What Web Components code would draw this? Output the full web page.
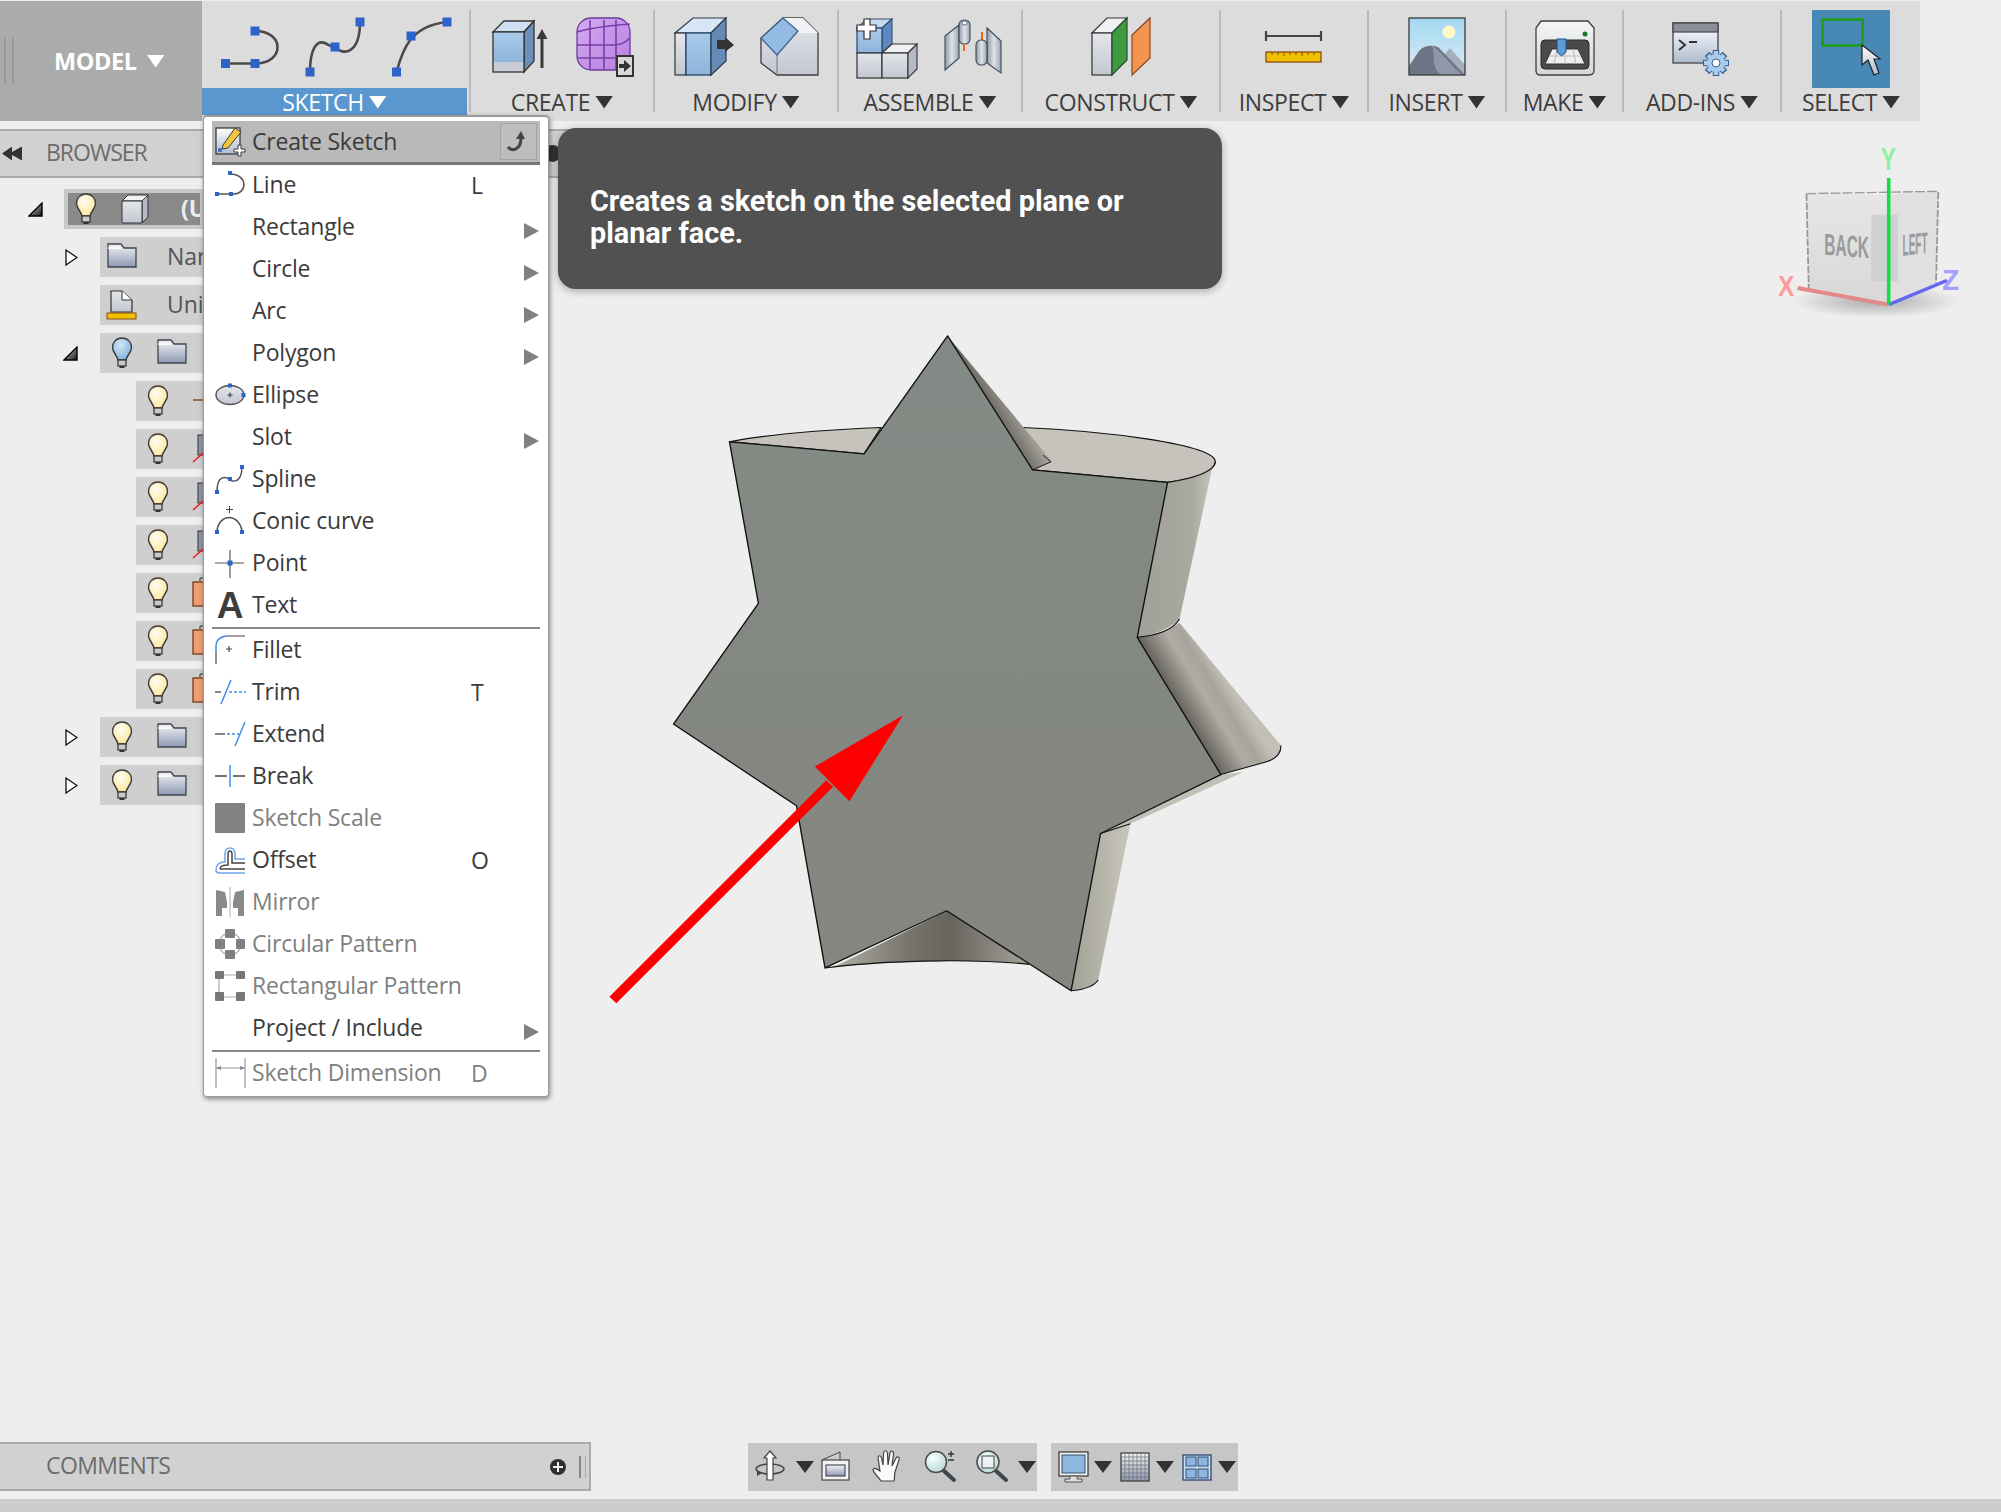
<!DOCTYPE html>
<html>
<head>
<meta charset="utf-8">
<title>Sketch menu</title>
<style>
	html, body { margin: 0; padding: 0; background: #eeeeee; }
	body { width: 2001px; height: 1512px; overflow: hidden; font-family: "Open Sans", "Noto Sans", sans-serif; color: #3c3c3c; }
</style>
</head>
<body>
<fx-app>
	<fx-toolbar>
		<tool-group label="SKETCH" w="269" active>
			<fx-icon name="tbLine"></fx-icon><fx-icon name="tbSpline"></fx-icon><fx-icon name="tbArc"></fx-icon>
		</tool-group>
		<tool-group label="CREATE" w="184">
			<fx-icon name="tbExtrude"></fx-icon><fx-icon name="tbForm"></fx-icon>
		</tool-group>
		<tool-group label="MODIFY" w="184">
			<fx-icon name="tbPress"></fx-icon><fx-icon name="tbFillet"></fx-icon>
		</tool-group>
		<tool-group label="ASSEMBLE" w="184">
			<fx-icon name="tbComponent"></fx-icon><fx-icon name="tbJoint"></fx-icon>
		</tool-group>
		<tool-group label="CONSTRUCT" w="198">
			<fx-icon name="tbPlane"></fx-icon>
		</tool-group>
		<tool-group label="INSPECT" w="148">
			<fx-icon name="tbMeasure"></fx-icon>
		</tool-group>
		<tool-group label="INSERT" w="138">
			<fx-icon name="tbInsert"></fx-icon>
		</tool-group>
		<tool-group label="MAKE" w="117">
			<fx-icon name="tbMake"></fx-icon>
		</tool-group>
		<tool-group label="ADD-INS" w="158">
			<fx-icon name="tbAddins"></fx-icon>
		</tool-group>
		<tool-group label="SELECT" w="138" last>
			<fx-icon name="tbSelect" style="margin-top:-8px"></fx-icon>
		</tool-group>
	</fx-toolbar>

	<!-- the menu covers the rows from x=203: only the part of a name left of it is written -->
	<browser-panel>
		<tree-row indent="64" toggle="open" bulb="bulb" icon="cube" selected>(U</tree-row>
		<tree-row indent="100" toggle="closed" icon="folder">Nar</tree-row>
		<tree-row indent="100" icon="units">Uni</tree-row>
		<tree-row indent="100" toggle="open" bulb="bulbBlue" icon="folder"></tree-row>
		<tree-row indent="136" bulb="bulb" icon="origin"></tree-row>
		<tree-row indent="136" bulb="bulb" icon="axis"></tree-row>
		<tree-row indent="136" bulb="bulb" icon="axis"></tree-row>
		<tree-row indent="136" bulb="bulb" icon="axis"></tree-row>
		<tree-row indent="136" bulb="bulb" icon="plane"></tree-row>
		<tree-row indent="136" bulb="bulb" icon="plane"></tree-row>
		<tree-row indent="136" bulb="bulb" icon="plane"></tree-row>
		<tree-row indent="100" toggle="closed" bulb="bulb" icon="folder"></tree-row>
		<tree-row indent="100" toggle="closed" bulb="bulb" icon="folder"></tree-row>
	</browser-panel>

	<model-view></model-view>
	<view-cube></view-cube>

	<sketch-menu>
		<menu-item head icon="miCreate">Create Sketch</menu-item>
		<menu-item icon="miLine" key="L">Line</menu-item>
		<menu-item sub>Rectangle</menu-item>
		<menu-item sub>Circle</menu-item>
		<menu-item sub>Arc</menu-item>
		<menu-item sub>Polygon</menu-item>
		<menu-item icon="miEllipse">Ellipse</menu-item>
		<menu-item sub>Slot</menu-item>
		<menu-item icon="miSpline">Spline</menu-item>
		<menu-item icon="miConic">Conic curve</menu-item>
		<menu-item icon="miPoint">Point</menu-item>
		<menu-item icon="miText">Text</menu-item>
		<menu-item divider></menu-item>
		<menu-item icon="miFillet">Fillet</menu-item>
		<menu-item icon="miTrim" key="T">Trim</menu-item>
		<menu-item icon="miExtend">Extend</menu-item>
		<menu-item icon="miBreak">Break</menu-item>
		<menu-item icon="miScale" off>Sketch Scale</menu-item>
		<menu-item icon="miOffset" key="O">Offset</menu-item>
		<menu-item icon="miMirror" off>Mirror</menu-item>
		<menu-item icon="miCircular" off>Circular Pattern</menu-item>
		<menu-item icon="miRectPat" off>Rectangular Pattern</menu-item>
		<menu-item sub>Project / Include</menu-item>
		<menu-item divider></menu-item>
		<menu-item icon="miDimension" key="D" off>Sketch Dimension</menu-item>
	</sketch-menu>

	<tool-tip>Creates a sketch on the selected plane or planar face.</tool-tip>

	<fx-footer></fx-footer>
</fx-app>

<script>
// gradients used by the toolbar and tree icons, ids are local to each shadow root
const DEFS = `
	<defs>
		<linearGradient id="gBlue" x1="0" y1="0" x2="0" y2="1"><stop offset="0" stop-color="#a9cbeb"/><stop offset="1" stop-color="#8fb4da"/></linearGradient>
		<linearGradient id="gGrey" x1="0" y1="0" x2="0" y2="1"><stop offset="0" stop-color="#e4e6ea"/><stop offset="1" stop-color="#c2c7d1"/></linearGradient>
		<linearGradient id="gSteel" x1="0" y1="0" x2="1" y2="0"><stop offset="0" stop-color="#8f9aa6"/><stop offset=".5" stop-color="#dfe3e8"/><stop offset="1" stop-color="#9aa5b1"/></linearGradient>
		<linearGradient id="gFolder" x1="0" y1="0" x2="0" y2="1"><stop offset="0" stop-color="#f4f5f8"/><stop offset="1" stop-color="#8b98b2"/></linearGradient>
		<linearGradient id="gPurple" x1="0" y1="0" x2="1" y2="1"><stop offset="0" stop-color="#d4aaf0"/><stop offset="1" stop-color="#b77fe2"/></linearGradient>
		<linearGradient id="gSky" x1="0" y1="0" x2="0" y2="1"><stop offset="0" stop-color="#a3d8f2"/><stop offset="1" stop-color="#dcedf4"/></linearGradient>
		<linearGradient id="gWhite" x1="0" y1="0" x2="0" y2="1"><stop offset="0" stop-color="#ffffff"/><stop offset="1" stop-color="#aebbd0"/></linearGradient>
		<linearGradient id="gBody" x1="0" y1="0" x2="0" y2="1"><stop offset="0" stop-color="#f5f5f5"/><stop offset="1" stop-color="#d4d6da"/></linearGradient>
		<radialGradient id="gBulb" cx=".42" cy=".32" r=".7"><stop offset="0" stop-color="#fffdf0"/><stop offset="1" stop-color="#fbe79b"/></radialGradient>
		<radialGradient id="gBulbB" cx=".42" cy=".32" r=".7"><stop offset="0" stop-color="#d3e6f7"/><stop offset="1" stop-color="#7fb2e0"/></radialGradient>
		<radialGradient id="gLens" cx=".35" cy=".3" r=".8"><stop offset="0" stop-color="#f6ffff"/><stop offset="1" stop-color="#b7d6d6"/></radialGradient>
	</defs>`;

const sq = (x, y, s = 9, c = '#2d62c8') => `<rect x="${x - s / 2}" y="${y - s / 2}" width="${s}" height="${s}" fill="${c}"/>`;
const bulb = g => `<path d="M11 1C5 1 1.500 5.500 1.500 10.500C1.500 15.500 6 18 7 23H15C16 18 20.500 15.500 20.500 10.500C20.500 5.500 17 1 11 1Z" fill="url(#${g})" stroke="#3a3a3a" stroke-width="1.400"/><rect x="7" y="23" width="8" height="6" fill="#c9c9c9" stroke="#333" stroke-width="1.200"/><rect x="8.500" y="29" width="5" height="2" fill="#333"/>`;
const folder = `<path d="M1 25V2H14L17 6H29V25Z" fill="url(#gFolder)" stroke="#3f4450" stroke-width="1.300"/><path d="M1 6H14" stroke="#fff" stroke-width="1.500"/>`;

const ICONS = {
	tbLine: [58, 58, `<path d="M4.500 45.500H34C64 45.500 64 13 34 13" fill="none" stroke="#4a4a4a" stroke-width="2.600"/>${sq(4.500, 45.500)}${sq(34, 45.500)}${sq(34, 13)}`],
	tbSpline: [58, 58, `<path d="M3 54C3 30 10 22 18 25C22 27 24 29 28 29C36 38 53 36 53 4" fill="none" stroke="#4a4a4a" stroke-width="2.600"/>${sq(3, 54)}${sq(28, 29)}${sq(53, 4)}`],
	tbArc: [58, 58, `<path d="M3.500 54C10 30 18 8 54 4" fill="none" stroke="#4a4a4a" stroke-width="2.600"/>${sq(3.500, 54)}${sq(18, 18)}${sq(54, 4)}`],
	tbExtrude: [58, 58, `<g transform="translate(2 0)"><path d="M1 14L12 3H42L32 14Z" fill="#cfe0f2" stroke="#333" stroke-width="1.300"/><path d="M32 14L42 3V43L32 54Z" fill="#6b8fbb" stroke="#333" stroke-width="1.300"/><rect x="1" y="14" width="31" height="30" fill="url(#gBlue)"/><rect x="1" y="44" width="31" height="10" fill="#c8ccd6"/><rect x="1" y="14" width="31" height="40" fill="none" stroke="#333" stroke-width="1.300"/><path d="M50 50V19" stroke="#3a3a3a" stroke-width="3"/><path d="M44.500 21L50 11L55.500 21Z" fill="#3a3a3a"/></g>`],
	tbForm: [58, 58, `<rect x="1" y="0" width="53" height="52" rx="14" fill="url(#gPurple)" stroke="#6c3b97" stroke-width="1.300"/><path d="M1 14C14 10 28 8 54 6M1 27H38C44 27 50 24 54 20M1 40H54M14 2V52M28 2V52M40 2V27M40 27V52" fill="none" stroke="#7a3fa8" stroke-width="1.600"/><rect x="41" y="38" width="16" height="20" fill="#d8d8d8" stroke="#333" stroke-width="2"/><path d="M43 46H48V42L55 48L48 54V50H43Z" fill="#333"/>`],
	tbPress: [60, 58, `<g transform="translate(2 0)"><path d="M0 15L18 0H51L36 15Z" fill="#d7e6f6" stroke="#2e3a4a" stroke-width="1.200"/><rect x="0" y="15" width="11" height="42" fill="url(#gGrey)" stroke="#333" stroke-width="1.200"/><rect x="11" y="15" width="25" height="42" fill="url(#gBlue)" stroke="#24466e" stroke-width="1.300"/><path d="M36 15L51 0V43L36 57Z" fill="#658ab6" stroke="#2e3a4a" stroke-width="1.200"/><path d="M42 22H50V19L59 27L50 34V31H42Z" fill="#333"/></g>`],
	tbFillet: [58, 58, `<path d="M0 20L22 0H42L57 15V57H16L0 45Z" fill="url(#gGrey)" stroke="#3d3d3d" stroke-width="1.300"/><path d="M22 0H42L57 15H37Z" fill="#f1f2f5"/><path d="M16 37V57" stroke="#777" stroke-width="1"/><path d="M0 20L22 0L37 13L16 37Z" fill="#93bbe3" stroke="#3d5f88" stroke-width="1.200"/>`],
	tbComponent: [60, 60, `<path d="M0 10L10 1H35L25 10Z" fill="#c6dbf2" stroke="#33506f" stroke-width="1.100"/><path d="M25 10L35 1V26L25 35Z" fill="#6088c0" stroke="#33506f" stroke-width="1.100"/><rect x="0" y="10" width="25" height="25" fill="url(#gBlue)" stroke="#24466e" stroke-width="1.200"/><rect x="0" y="35" width="25" height="25" fill="url(#gGrey)" stroke="#333" stroke-width="1.200"/><path d="M25 35L35 26H60L51 35Z" fill="#eef0f4" stroke="#333" stroke-width="1.100"/><rect x="25" y="35" width="26" height="25" fill="url(#gGrey)" stroke="#333" stroke-width="1.200"/><path d="M51 35L60 26V51L51 60Z" fill="#b4bac6" stroke="#333" stroke-width="1.100"/><path d="M7 1H13V7H19V13H13V21H7V13H0V7H7Z" fill="#fff" stroke="#333" stroke-width="1.200"/>`],
	tbJoint: [58, 58, `<path d="M0 18L14 7V40L0 52Z" fill="url(#gSteel)" stroke="#3a4a5a" stroke-width="1.100"/><rect x="14" y="2" width="11" height="24" rx="5" fill="url(#gSteel)" stroke="#3a4a5a" stroke-width="1.100"/><ellipse cx="19.500" cy="5" rx="2.500" ry="2" fill="#fff" stroke="#3a4a5a" stroke-width=".8"/><path d="M19 26V33M37 14V24" stroke="#f06a14" stroke-width="2"/><path d="M42 10L56 23V55L42 45Z" fill="url(#gSteel)" stroke="#3a4a5a" stroke-width="1.100"/><rect x="31" y="22" width="11" height="25" rx="5" fill="url(#gSteel)" stroke="#3a4a5a" stroke-width="1.100"/>`],
	tbPlane: [60, 58, `<path d="M1 15L16 0H36L21 15Z" fill="#f1f2f4" stroke="#333" stroke-width="1.200"/><rect x="1" y="15" width="20" height="42" fill="url(#gGrey)" stroke="#333" stroke-width="1.200"/><path d="M21 15L36 0V42L21 57Z" fill="#3f9a3f" stroke="#2a4a2a" stroke-width="1.200"/><path d="M41 17L59 0V40L41 57Z" fill="#f39550" stroke="#8a4a20" stroke-width="1.200"/>`],
	tbMeasure: [58, 58, `<path d="M1 13V23M1 18H56M56 13V23" fill="none" stroke="#444" stroke-width="2.200"/><rect x="1" y="34" width="55" height="10" fill="#f0c000" stroke="#8a4a10" stroke-width="1.300"/><path d="M7 34v3M13 34v3M19 34v4M25 34v3M31 34v3M37 34v4M43 34v3M49 34v3" stroke="#8a4a10" stroke-width="1"/>`],
	tbInsert: [58, 58, `<rect x="1" y="0" width="56" height="57" fill="url(#gSky)"/><ellipse cx="41" cy="14" rx="6.500" ry="6.500" fill="#fff8c8"/><path d="M35 38L42 30L57 47V57H35Z" fill="#a3afba"/><path d="M1 48L11 33C16 27 24 27 30 29L57 57H1Z" fill="#6c7485"/><path d="M24 28C30 30 44 48 54 57H34C22 50 28 38 24 28Z" fill="#8f98a8"/><rect x="1" y="0" width="56" height="57" fill="none" stroke="#3a3a3a" stroke-width="1.300"/>`],
	tbMake: [60, 58, `<path d="M6 3H53L59 10V52C59 55 57 57 54 57H5C2 57 1 55 1 52V10Z" fill="url(#gBody)" stroke="#3f3f3f" stroke-width="1.300"/><circle cx="50" cy="16" r="2.500" fill="#127a28"/><rect x="6" y="22" width="48" height="29" rx="4" fill="#4a4a4a" stroke="#2a2a2a"/><path d="M17 31H43L50 46H10Z" fill="#eeeeee" stroke="#333"/><path d="M14 38H46M22 31L19 46M30 31V46M38 31L41 46" stroke="#bbb" stroke-width="1"/><path d="M22 21H31V34L26.500 38L22 34Z" fill="#5a9bd8" stroke="#1f4f82"/>`],
	tbAddins: [60, 58, `<rect x="1" y="5" width="45" height="40" fill="url(#gWhite)" stroke="#444" stroke-width="1.300"/><rect x="1" y="5" width="45" height="9" fill="#8a8e96" stroke="#444" stroke-width="1.200"/><path d="M7 22L13 27L7 32M17 24H25" fill="none" stroke="#333" stroke-width="2"/><path d="M44 32V58M31 45H57M35 36L53 54M53 36L35 54" stroke="#35608f" stroke-width="6.500"/><path d="M44 33V57M32 45H56M36 37L52 53M52 37L36 53" stroke="#a9cbee" stroke-width="4.500"/><circle cx="44" cy="45" r="9" fill="#a9cbee"/><circle cx="44" cy="45" r="4" fill="#fff" stroke="#35608f"/>`],
	tbSelect: [78, 78, `<rect width="78" height="78" rx="1" fill="#4888b5"/><rect x="10.500" y="9.500" width="40" height="26" fill="none" stroke="#1f9c13" stroke-width="2.500"/><path d="M50 35V55L56 50L62 65L67 63L62 49L68 49Z" fill="url(#gWhite)" stroke="#222" stroke-width="1.200"/>`],

	bulb: [22, 32, bulb('gBulb')],
	bulbBlue: [22, 32, bulb('gBulbB')],
	cube: [30, 30, `<path d="M1 7L7 1H27L21 7Z" fill="#f1f2f5" stroke="#333"/><path d="M21 7L27 1V23L21 29Z" fill="#b4bac6" stroke="#333"/><rect x="1" y="7" width="20" height="22" rx="1" fill="url(#gGrey)" stroke="#333"/>`],
	folder: [30, 30, folder],
	units: [30, 30, `<path d="M4 1H15L25 10V22H4Z" fill="url(#gGrey)" stroke="#333" stroke-width="1.200"/><path d="M15 1V10H25" fill="#fff" stroke="#333"/><rect x="0" y="23" width="29" height="6" fill="#f0c000" stroke="#8a4a10"/>`],
	origin: [30, 30, `<path d="M0 14H10M14 14L18 10L22 14L18 18Z" fill="none" stroke="#8a4a22" stroke-width="1.400"/>`],
	axis: [30, 30, `<rect x="5" y="1" width="18" height="20" fill="#8e97a8" stroke="#333"/><path d="M0 28L18 12" stroke="#ee1c1c" stroke-width="1.500"/>`],
	plane: [30, 30, `<path d="M7 3V0H11V3" fill="none" stroke="#333"/><rect x="0" y="4" width="26" height="24" fill="#ec9f73" stroke="#7a3a14" stroke-width="1.300"/>`],

	miCreate: [30, 30, `<rect x="1" y="1" width="24" height="26" fill="url(#gWhite)" stroke="#3c3c3c" stroke-width="1.300"/>${sq(5, 23, 3.500)}<path d="M8 18L20 1L26 5L13 21L7 22Z" fill="#f3c43a" stroke="#3c3c3c"/><path d="M19 22H23V18H26V22H30V25H26V29H23V25H19Z" fill="#fff" stroke="#3c3c3c"/>`],
	miPin: [24, 24, `<path d="M4 17C8 22 17 20 17 8" fill="none" stroke="#444" stroke-width="3"/><path d="M12 9L17 1L21 9Z" fill="#444"/>`],
	miLine: [32, 30, `<path d="M2 24H18C33 24 33 4 15 4" fill="none" stroke="#555" stroke-width="1.500"/>${sq(2, 24, 4)}${sq(16, 24, 4)}${sq(15, 3, 4)}`],
	miEllipse: [32, 30, `<ellipse cx="15" cy="15" rx="14" ry="9.500" fill="url(#gGrey)" stroke="#555" stroke-width="1.400"/><path d="M15 12.500V17.500M12.500 15H17.500" stroke="#333"/>${sq(15, 5.500, 4)}${sq(28.500, 15, 4)}`],
	miSpline: [32, 30, `<path d="M2 28C2 16 6 12 12 14C14 15 15 16 17 17C24 18 27 12 27 2" fill="none" stroke="#555" stroke-width="1.500"/>${sq(2, 28, 4)}${sq(15, 15, 4)}${sq(27, 3, 4)}`],
	miConic: [32, 30, `<path d="M2 25C4 7 24 7 27 25" fill="none" stroke="#555" stroke-width="1.500"/><path d="M14.500 0V7M11 3.500H18" stroke="#444"/>${sq(2, 26, 4)}${sq(27, 26, 4)}`],
	miPoint: [32, 30, `<path d="M0 15H29M15 2V30" stroke="#555" stroke-width="1.200"/>${sq(15, 15, 5)}`],
	miText: [32, 34, `<text x="15" y="30" text-anchor="middle" font-family="Liberation Sans, sans-serif" font-weight="700" font-size="37" fill="#3c3c3c">A</text>`],
	miFillet: [32, 30, `<path d="M1 18V11C1 5 5 2 11 1" fill="none" stroke="#3f8be8" stroke-width="1.500"/><path d="M11 1H30M1 18V29M14 11V17M11 14H17" stroke="#444" stroke-width="1.200"/>`],
	miTrim: [32, 30, `<path d="M0 15H6" stroke="#444" stroke-width="1.300"/><path d="M6 27L16 3" stroke="#3f8be8" stroke-width="1.500"/><path d="M14 15H31" stroke="#3f8be8" stroke-width="1.300" stroke-dasharray="3 2"/>`],
	miExtend: [32, 30, `<path d="M0 15H10" stroke="#444" stroke-width="1.300"/><path d="M12 15H24" stroke="#3f8be8" stroke-width="1.300" stroke-dasharray="3 2"/><path d="M20 27L30 3" stroke="#3f8be8" stroke-width="1.500"/>`],
	miBreak: [32, 30, `<path d="M0 15H12M18 15H30" stroke="#444" stroke-width="1.300"/><path d="M15 4V26" stroke="#3f8be8" stroke-width="1.500"/>`],
	miScale: [32, 30, `<rect x="0" y="0" width="30" height="30" rx="1" fill="#828282"/>`],
	miOffset: [32, 30, `<path d="M1 25C1 19 5 17 10 17V9C10 5 12 3 15 3C18 3 20 5 20 9V14H30M30 28H5C2 28 1 27 1 25" fill="none" stroke="#6ea6ee" stroke-width="1.500"/><path d="M5 24C5 21 8 20 13 20V9C13 7 14 6 15 6C16 6 17 7 17 9V18H30M30 24H5" fill="none" stroke="#444" stroke-width="1.500"/>`],
	miMirror: [32, 30, `<path d="M1 3L10 5L12 15V21H7V29H1Z" fill="#8a8a8a"/><path d="M29 3L20 5L18 15V21H23V29H29Z" fill="#8a8a8a"/><path d="M15 0V30" stroke="#aaa"/>`],
	miCircular: [32, 30, `<circle cx="15" cy="15" r="11" fill="none" stroke="#bbb" stroke-width="1.300"/><rect x="10" y="0" width="10" height="9" rx="1" fill="#808080"/><rect x="10" y="21" width="10" height="9" rx="1" fill="#808080"/><rect x="0" y="10" width="10" height="10" rx="1" fill="#808080"/><rect x="21" y="10" width="9" height="10" rx="1" fill="#808080"/>`],
	miRectPat: [32, 30, `<path d="M4 4H26M4 26H26M4 4V26" stroke="#aaa" stroke-width="1.200"/><rect x="0" y="0" width="9" height="8" rx="1" fill="#777"/><rect x="21" y="0" width="9" height="8" rx="1" fill="#777"/><rect x="0" y="21" width="9" height="9" rx="1" fill="#777"/><rect x="21" y="21" width="9" height="9" rx="1" fill="#777"/>`],
	miDimension: [32, 30, `<path d="M1 0V30M30 0V30M1 10H30" stroke="#999" stroke-width="1.200"/><path d="M1 10L6 8V12ZM30 10L25 8V12Z" fill="#888"/>`],

	navOrbit: [32, 32, `<ellipse cx="16" cy="18" rx="14" ry="5" fill="none" stroke="#444" stroke-width="1.500"/><path d="M16 0L22 7H19V29H13V7H10Z" fill="#fff" stroke="#444" stroke-width="1.200"/><path d="M8 22L3 19V25Z" fill="#444"/>`],
	navCamera: [30, 32, `<path d="M1 9L19 1V9" fill="#ccc" stroke="#444"/><rect x="1" y="9" width="27" height="20" fill="#f2f2f2" stroke="#444" stroke-width="1.200"/><rect x="5" y="14" width="19" height="11" fill="url(#gFolder)" stroke="#333"/>`],
	navHand: [32, 34, `<path d="M9 31C6 26 2 24 1 20C2 17 5 19 8 21L6 8C6 5 9 5 9.500 8L11 15L11.500 3C12 0 15 0 15.500 3L16 15L18 3C18.500 0 22 1 21.500 4L20 16L24 8C25.500 6 28 7 27 10L23 22C22 26 23 28 22 31Z" fill="#fafafa" stroke="#444" stroke-width="1.200"/>`],
	navZoom: [34, 34, `<path d="M20 20L31 30" stroke="#3b4650" stroke-width="4" stroke-linecap="round"/><circle cx="13" cy="12" r="10.500" fill="url(#gLens)" stroke="#4a4a4a" stroke-width="1.500"/><path d="M25 4H31M28 1V7M25 10H31" stroke="#333" stroke-width="1.300"/>`],
	navFit: [32, 34, `<path d="M19 20L30 30" stroke="#3b4650" stroke-width="4" stroke-linecap="round"/><circle cx="12" cy="12" r="11" fill="url(#gLens)" stroke="#4a4a4a" stroke-width="1.500"/><rect x="6" y="6" width="12" height="12" fill="#eef0f4" stroke="#444"/>`],
	navDisplay: [32, 32, `<rect x="1" y="1" width="29" height="24" fill="#f2f2f2" stroke="#333" stroke-width="1.200"/><rect x="4" y="4" width="23" height="18" fill="#8fb6e0" stroke="#33506f"/><path d="M12 25H19V28H24V31H7V28H12Z" fill="#ddd" stroke="#555"/>`],
	navGrid: [30, 30, `<rect x="1" y="1" width="28" height="28" fill="url(#gFolder)" stroke="#333" stroke-width="1.200"/><path d="M5 1V29M9 1V29M13 1V29M17 1V29M21 1V29M25 1V29M1 5H29M1 9H29M1 13H29M1 17H29M1 21H29M1 25H29" stroke="#777" stroke-width=".8"/>`],
	navViews: [30, 30, `<rect x="1" y="3" width="28" height="25" fill="#c9ddf2" stroke="#1e3a6a" stroke-width="1.200"/><rect x="4" y="5" width="10" height="9" fill="#8fb6e0" stroke="#33506f"/><rect x="16" y="5" width="10" height="9" fill="#8fb6e0" stroke="#33506f"/><rect x="4" y="17" width="10" height="9" fill="#8fb6e0" stroke="#33506f"/><rect x="16" y="17" width="10" height="9" fill="#8fb6e0" stroke="#33506f"/>`]
};

// shared base: open shadow root filled from a string
class FxElement extends HTMLElement {
	constructor() {
		super();
		this.attachShadow({mode: 'open'});
	}
	connectedCallback() {
		this.shadowRoot.innerHTML = this.render();
	}
}

class FxIcon extends FxElement {
	render() {
		const [w, h, body] = ICONS[this.getAttribute('name')];
		return `<style>:host { display: block; width: ${w}px; height: ${h}px; flex: none; } svg { display: block; overflow: visible; }</style>
			<svg width="${w}" height="${h}" viewBox="0 0 ${w} ${h}">${DEFS}${body}</svg>`;
	}
}

class ToolGroup extends FxElement {
	render() {
		const active = this.hasAttribute('active');
		const last = this.hasAttribute('last');
		return `<style>
			:host { display: flex; flex-direction: column; flex: none; box-sizing: border-box; height: 102px;
				width: ${this.getAttribute('w')}px; ${last ? '' : 'border-right: 2px solid #bbbbbb;'} }
			.icons { display: flex; justify-content: center; gap: 28px; height: 78px; padding-top: 8px; box-sizing: border-box; flex: none; }
			.label { display: flex; align-items: center; justify-content: center; gap: 5px; height: 27px; flex: none;
				font-size: 23px; letter-spacing: -.35px; color: ${active ? '#fff' : '#3d3d3d'}; ${active ? 'background: #5a97cf; margin-right: 2px;' : ''} }
			.tri { width: 18px; height: 13px; margin-top: 1px; background: ${active ? '#fff' : '#333'}; clip-path: polygon(0 0, 100% 0, 50% 100%); }
		</style>
		<div class="icons"><slot></slot></div>
		<div class="label"><span>${this.getAttribute('label')}</span><i class="tri"></i></div>`;
	}
}

class FxToolbar extends FxElement {
	render() {
		return `<style>
			:host { display: flex; width: 1920px; height: 120px; margin-top: 1px; background: #dcdcdc; flex: none; }
			.model { display: flex; align-items: center; width: 202px; height: 120px; background: #ababab; box-sizing: border-box; padding-left: 4px; flex: none; }
			.grip { width: 6px; height: 46px; border-left: 2px solid #999; border-right: 2px solid #999; margin-right: 40px; box-sizing: content-box; }
			.name { font-weight: 700; font-size: 23.500px; letter-spacing: -.4px; color: #fff; }
			.tri { width: 18px; height: 13px; margin-left: 10px; background: #fff; clip-path: polygon(0 0, 100% 0, 50% 100%); }
			.groups { display: flex; padding-top: 9px; }
		</style>
		<div class="model"><i class="grip"></i><span class="name">MODEL</span><i class="tri"></i></div>
		<div class="groups"><slot></slot></div>`;
	}
}

class TreeRow extends FxElement {
	render() {
		const toggle = this.getAttribute('toggle');
		const sel = this.hasAttribute('selected');
		const bulbName = this.getAttribute('bulb');
		const indent = +this.getAttribute('indent');
		let tog = '';
		if (toggle == 'open') {
			tog = `<svg width="15" height="15" viewBox="0 0 15 15"><defs><linearGradient id="t" x1="0" y1="0" x2="1" y2="1"><stop offset="0" stop-color="#ddd"/><stop offset="1" stop-color="#111"/></linearGradient></defs><path d="M1 14L14 1V14Z" fill="url(#t)" stroke="#000" stroke-width="1.400"/></svg>`;
		}
		if (toggle == 'closed') {
			tog = `<svg width="13" height="17" viewBox="0 0 13 17"><path d="M1 1L12 8.500L1 16Z" fill="#fafafa" stroke="#111" stroke-width="1.300"/></svg>`;
		}
		return `<style>
			:host { display: flex; height: 40px; width: 204px; flex: none; }
			.tog { display: flex; align-items: center; justify-content: flex-end; box-sizing: border-box; width: ${indent}px; padding-right: ${indent == 64 ? 21 : 22}px; flex: none; }
			.body { flex: 1; min-width: 0; display: flex; align-items: center; overflow: hidden; white-space: nowrap; background: ${sel ? '#8a8a8a' : '#cfcfcf'};
				${sel ? 'border: 4px solid #c8c8c8;' : ''} font-size: 23px; color: ${sel ? '#eee' : '#555'}; ${sel ? 'font-weight: 700;' : ''} box-sizing: border-box; }
			.bulb { margin-left: ${sel ? 7 : 11}px; margin-right: 24px; }
			.icon { margin-left: ${bulbName ? 0 : 7}px; margin-right: 30px; }
			span { padding-bottom: 3px; }
		</style>
		<div class="tog">${tog}</div>
		<div class="body">
			${bulbName ? `<fx-icon class="bulb" name="${bulbName}"></fx-icon>` : ''}
			<fx-icon class="icon" name="${this.getAttribute('icon')}"></fx-icon>
			<span><slot></slot></span>
		</div>`;
	}
}

class BrowserPanel extends FxElement {
	render() {
		return `<style>
			:host { display: flex; flex-direction: column; flex: none; margin-top: 8px; }
			.head { display: flex; align-items: center; box-sizing: border-box; width: 575px; height: 49px; background: #d1d1d1;
				border-top: 2px solid #aaa; border-bottom: 2px solid #aaa; color: #6c6c6c; font-size: 23px; letter-spacing: -1px; }
			.head span { padding-bottom: 3px; margin-left: -1px; }
			.back { width: 20px; height: 14px; margin: 0 25px 0 2px; background: #333; flex: none;
				clip-path: polygon(0 50%, 50% 0, 50% 40%, 100% 0, 100% 100%, 50% 60%, 50% 100%); }
			.dot { margin-left: auto; margin-right: 14px; width: 17px; height: 17px; border-radius: 50%; background: #333; flex: none; }
			.tree { display: flex; flex-direction: column; gap: 8px; padding-top: 11px; }
		</style>
		<div class="head"><i class="back"></i><span>BROWSER</span><i class="dot"></i></div>
		<div class="tree"><slot></slot></div>`;
	}
}

class MenuItem extends FxElement {
	render() {
		if (this.hasAttribute('divider')) {
			return `<style>:host { display: block; height: 2px; background: #888; margin: 1px 0 0; flex: none; }</style>`;
		}
		const head = this.hasAttribute('head');
		const icon = this.getAttribute('icon');
		const key = this.getAttribute('key');
		return `<style>
			:host { display: flex; align-items: center; position: relative; box-sizing: border-box; height: ${head ? 44 : 42}px; flex: none;
				${head ? 'background: #b9b9b9; border-bottom: 3px solid #777; margin-bottom: -1px;' : ''}
				color: ${this.hasAttribute('off') ? '#808080' : '#3b3b3b'}; font-size: 23px; letter-spacing: -.18px; }
			.ic { width: 33px; margin-left: 3px; margin-right: 4px; display: flex; flex: none; }
			.txt { flex: 1; white-space: nowrap; padding-bottom: 2px; }
			.key { position: absolute; left: 259px; top: 5px; letter-spacing: 0; }
			.sub { width: 15px; height: 16px; margin: 8px 1px 0 0; background: #808080; clip-path: polygon(0 0, 100% 50%, 0 100%); flex: none; }
			.pin { width: 37px; height: 37px; margin-right: 3px; padding-right: 5px; display: flex; align-items: center; justify-content: center; background: #bdbdbd; border: 1px solid #a5a5a5; box-sizing: border-box; flex: none; }
		</style>
		<div class="ic">${icon ? `<fx-icon name="${icon}"></fx-icon>` : ''}</div>
		<span class="txt"><slot></slot></span>
		${key ? `<span class="key">${key}</span>` : ''}
		${this.hasAttribute('sub') ? '<i class="sub"></i>' : ''}
		${head ? '<div class="pin"><fx-icon name="miPin"></fx-icon></div>' : ''}`;
	}
}

class SketchMenu extends FxElement {
	render() {
		return `<style>
			:host { position: absolute; left: 203px; top: 115px; width: 346px; height: 982px; box-sizing: border-box; padding: 4px 8px 0;
				display: flex; flex-direction: column; background: #fff; border: 1px solid #9a9a9a; border-top-width: 2px; border-radius: 4px;
				box-shadow: 1px 2px 5px rgba(0, 0, 0, .45); z-index: 3; }
		</style><slot></slot>`;
	}
}

class ToolTip extends FxElement {
	render() {
		return `<style>
			:host { position: absolute; left: 558px; top: 128px; width: 664px; height: 161px; box-sizing: border-box; padding: 16px 70px 0 32px;
				display: flex; align-items: center; background: #515151; border-radius: 18px; box-shadow: 0 2px 8px rgba(0, 0, 0, .3);
				font: 700 28.800px/32px Roboto, "Liberation Sans", sans-serif; color: #fff; z-index: 4; }
		</style><span><slot></slot></span>`;
	}
}

class ModelView extends FxElement {
	render() {
		// drawn in the coordinates of a 720x700 box scaled to 1568x1524
		return `<style>:host { position: absolute; left: 600px; top: 310px; width: 720px; height: 700px; } svg { display: block; }</style>
		<svg width="720" height="700" viewBox="0 0 1568 2100" preserveAspectRatio="none">
			<defs>
				<linearGradient id="f" x1="0" y1="0" x2="0" y2="1"><stop offset="0" stop-color="#838a85"/><stop offset="1" stop-color="#85867f"/></linearGradient>
				<linearGradient id="a" gradientUnits="userSpaceOnUse" x1="1170" y1="0" x2="1340" y2="0"><stop offset="0" stop-color="#a1a098"/><stop offset=".7" stop-color="#aaa9a0"/><stop offset="1" stop-color="#c9c7bd"/></linearGradient>
				<linearGradient id="b" gradientUnits="userSpaceOnUse" x1="1260" y1="885" x2="1362" y2="825"><stop offset="0" stop-color="#65635b"/><stop offset=".5" stop-color="#aeaca4"/><stop offset=".75" stop-color="#a6a49c"/><stop offset="1" stop-color="#c2c0b6"/></linearGradient>
				<linearGradient id="c" gradientUnits="userSpaceOnUse" x1="1030" y1="0" x2="1155" y2="0"><stop offset="0" stop-color="#a3a297"/><stop offset="1" stop-color="#c9c7bc"/></linearGradient>
				<linearGradient id="d" gradientUnits="userSpaceOnUse" x1="850" y1="210" x2="915" y2="172"><stop offset="0" stop-color="#6f6d66"/><stop offset="1" stop-color="#c8c6be"/></linearGradient>
				<linearGradient id="e" gradientUnits="userSpaceOnUse" x1="505" y1="0" x2="935" y2="0"><stop offset="0" stop-color="#b0aea5"/><stop offset=".4" stop-color="#75736b"/><stop offset=".6" stop-color="#66645d"/><stop offset="1" stop-color="#a5a39a"/></linearGradient>
			</defs>
			<g transform="scale(1 1.340)" stroke-linejoin="round">
				<path d="M282 295C380 275 500 268 612 263L575 322Z" fill="#c5c3bb" stroke="#111" stroke-width="2.500"/>
				<path d="M920 263C1090 270 1340 300 1340 340C1340 362 1290 378 1236 386L942 358Z" fill="#c5c3bb" stroke="#111" stroke-width="2.500"/>
				<path d="M757 58L985 340L942 358Z" fill="url(#d)"/>
				<path d="M942 358L982 340L965 325" fill="none" stroke="#111" stroke-width="2"/>
				<path d="M1236 386C1290 378 1325 362 1335 345L1262 692C1240 715 1200 730 1170 733Z" fill="url(#a)"/>
				<path d="M1170 733C1200 730 1240 715 1262 700L1483 975C1483 990 1475 1005 1450 1012L1352 1040Z" fill="url(#b)"/>
				<path d="M1352 1040L1090 1172L1155 1150L1400 1035Z" fill="#c2c0b6"/>
				<path d="M1090 1172L1155 1150L1085 1500C1075 1515 1050 1522 1026 1524Z" fill="url(#c)"/>
				<path d="M505 1473C600 1460 800 1450 935 1465L757 1345Z" fill="url(#e)"/>
				<path d="M1170 733C1200 730 1245 722 1262 692M1236 386C1290 378 1340 362 1340 340M1085 1500C1075 1515 1050 1522 1026 1524M1090 1172L1155 1150M490 1473C600 1458 800 1450 935 1465M1483 975C1483 990 1475 1005 1450 1012L1352 1040" fill="none" stroke="#111" stroke-width="2.500"/>
				<path d="M757 58L942 358L1236 386L1170 733L1352 1040L1090 1172L1026 1524L755 1345L490 1473L428 1110L160 927L345 657L282 295L575 322Z" fill="url(#f)" stroke="#111" stroke-width="3"/>
				<path d="M28 1545L500 1060" stroke="#ff0000" stroke-width="21"/>
				<path d="M660 907L468 1022L543 1100Z" fill="#ff0000"/>
			</g>
		</svg>`;
	}
}

class ViewCube extends FxElement {
	render() {
		return `<style>:host { position: absolute; left: 1773px; top: 143px; width: 201px; height: 180px; } svg { display: block; overflow: visible; }</style>
		<svg width="201" height="180" viewBox="1060 430 450 540" preserveAspectRatio="none">
			<defs>
				<radialGradient id="s"><stop offset="0" stop-color="#000" stop-opacity=".28"/><stop offset="1" stop-color="#000" stop-opacity="0"/></radialGradient>
				<linearGradient id="l" x1="0" y1="0" x2="0" y2="1"><stop offset="0" stop-color="#e6e6e6"/><stop offset="1" stop-color="#d8d8d8"/></linearGradient>
			</defs>
			<ellipse cx="1290" cy="905" rx="190" ry="50" fill="url(#s)"/>
			<path d="M1135 582L1318 585V915L1140 865Z" fill="url(#l)"/>
			<path d="M1318 585L1430 575L1425 850L1318 915Z" fill="#e0e0e0"/>
			<rect x="1280" y="645" width="60" height="200" fill="#cfd0d2"/>
			<path d="M1135 582L1430 575L1425 850M1135 582L1140 865" fill="none" stroke="#999" stroke-width="4" stroke-dasharray="22 5"/>
			<text transform="translate(1175 765) skewY(6)" font-family="Liberation Sans, sans-serif" font-weight="700" font-size="92" fill="#9a9a9a" textLength="100" lengthAdjust="spacingAndGlyphs">BACK</text>
			<text transform="translate(1350 768) skewY(-8)" font-family="Liberation Sans, sans-serif" font-weight="700" font-size="90" fill="#9a9a9a" textLength="56" lengthAdjust="spacingAndGlyphs">LEFT</text>
			<path d="M1115 865L1319 915" stroke="#e28a8a" stroke-width="12"/>
			<path d="M1319 915L1450 842" stroke="#6565f0" stroke-width="10"/>
			<path d="M1319 535V915" stroke="#10e040" stroke-width="8"/>
			<text x="1318" y="510" text-anchor="middle" font-family="Liberation Sans, sans-serif" font-weight="700" font-size="94" fill="#90f0a8" textLength="34" lengthAdjust="spacingAndGlyphs">Y</text>
			<text x="1090" y="890" text-anchor="middle" font-family="Liberation Sans, sans-serif" font-weight="700" font-size="90" fill="#ff9a9a" textLength="36" lengthAdjust="spacingAndGlyphs">X</text>
			<text x="1458" y="870" text-anchor="middle" font-family="Liberation Sans, sans-serif" font-weight="700" font-size="90" fill="#a0a0ff" textLength="38" lengthAdjust="spacingAndGlyphs">Z</text>
		</svg>`;
	}
}

class FxFooter extends FxElement {
	render() {
		const tri = m => `<i class="tri" style="margin-left:${m}px"></i>`;
		const icon = (n, m) => `<fx-icon name="${n}" style="margin-left:${m}px"></fx-icon>`;
		return `<style>
			:host { display: flex; align-items: flex-start; margin-top: auto; flex: none; height: 57px; }
			.comments { display: flex; align-items: center; box-sizing: border-box; width: 591px; height: 49px; padding-left: 46px; background: #d1d1d1;
				border: 2px solid #aaa; border-left: 0; font-size: 23px; letter-spacing: -.6px; color: #6c6c6c; flex: none; }
			.comments span { padding-bottom: 3px; }
			.plus { margin-left: auto; width: 16px; height: 16px; border-radius: 50%; background: #2f2f2f; position: relative; flex: none; }
			.plus::before { content: ""; position: absolute; left: 3px; right: 3px; top: 7px; height: 2px; background: #eee; }
			.plus::after { content: ""; position: absolute; top: 3px; bottom: 3px; left: 7px; width: 2px; background: #eee; }
			.bars { width: 4px; height: 22px; margin: 0 3px 0 13px; border-left: 2px solid #888; border-right: 1px solid #aaa; flex: none; }
			.nav { display: flex; align-items: center; box-sizing: border-box; height: 48px; margin-top: 1px; background: #c6c6c6; flex: none; }
			.one { width: 289px; margin-left: 157px; }
			.two { width: 187px; margin-left: 14px; }
			.tri { width: 18px; height: 12px; background: #333; clip-path: polygon(0 0, 100% 0, 50% 100%); flex: none; }
		</style>
		<div class="comments"><span>COMMENTS</span><i class="plus"></i><i class="bars"></i></div>
		<div class="nav one">${icon('navOrbit', 6)}${tri(10)}${icon('navCamera', 7)}${icon('navHand', 21)}${icon('navZoom', 19)}${icon('navFit', 19)}${tri(10)}</div>
		<div class="nav two">${icon('navDisplay', 7)}${tri(4)}${icon('navGrid', 8)}${tri(6)}${icon('navViews', 8)}${tri(6)}</div>`;
	}
}

class FxApp extends FxElement {
	render() {
		return `<style>
			:host { display: flex; flex-direction: column; position: relative; width: 2001px; height: 1512px; box-sizing: border-box; }
			.status { height: 13px; background: #cdcdcd; flex: none; }
		</style><slot></slot><div class="status"></div>`;
	}
}

customElements.define('fx-icon', FxIcon);
customElements.define('tool-group', ToolGroup);
customElements.define('fx-toolbar', FxToolbar);
customElements.define('tree-row', TreeRow);
customElements.define('browser-panel', BrowserPanel);
customElements.define('menu-item', MenuItem);
customElements.define('sketch-menu', SketchMenu);
customElements.define('tool-tip', ToolTip);
customElements.define('model-view', ModelView);
customElements.define('view-cube', ViewCube);
customElements.define('fx-footer', FxFooter);
customElements.define('fx-app', FxApp);
</script>
</body>
</html>
